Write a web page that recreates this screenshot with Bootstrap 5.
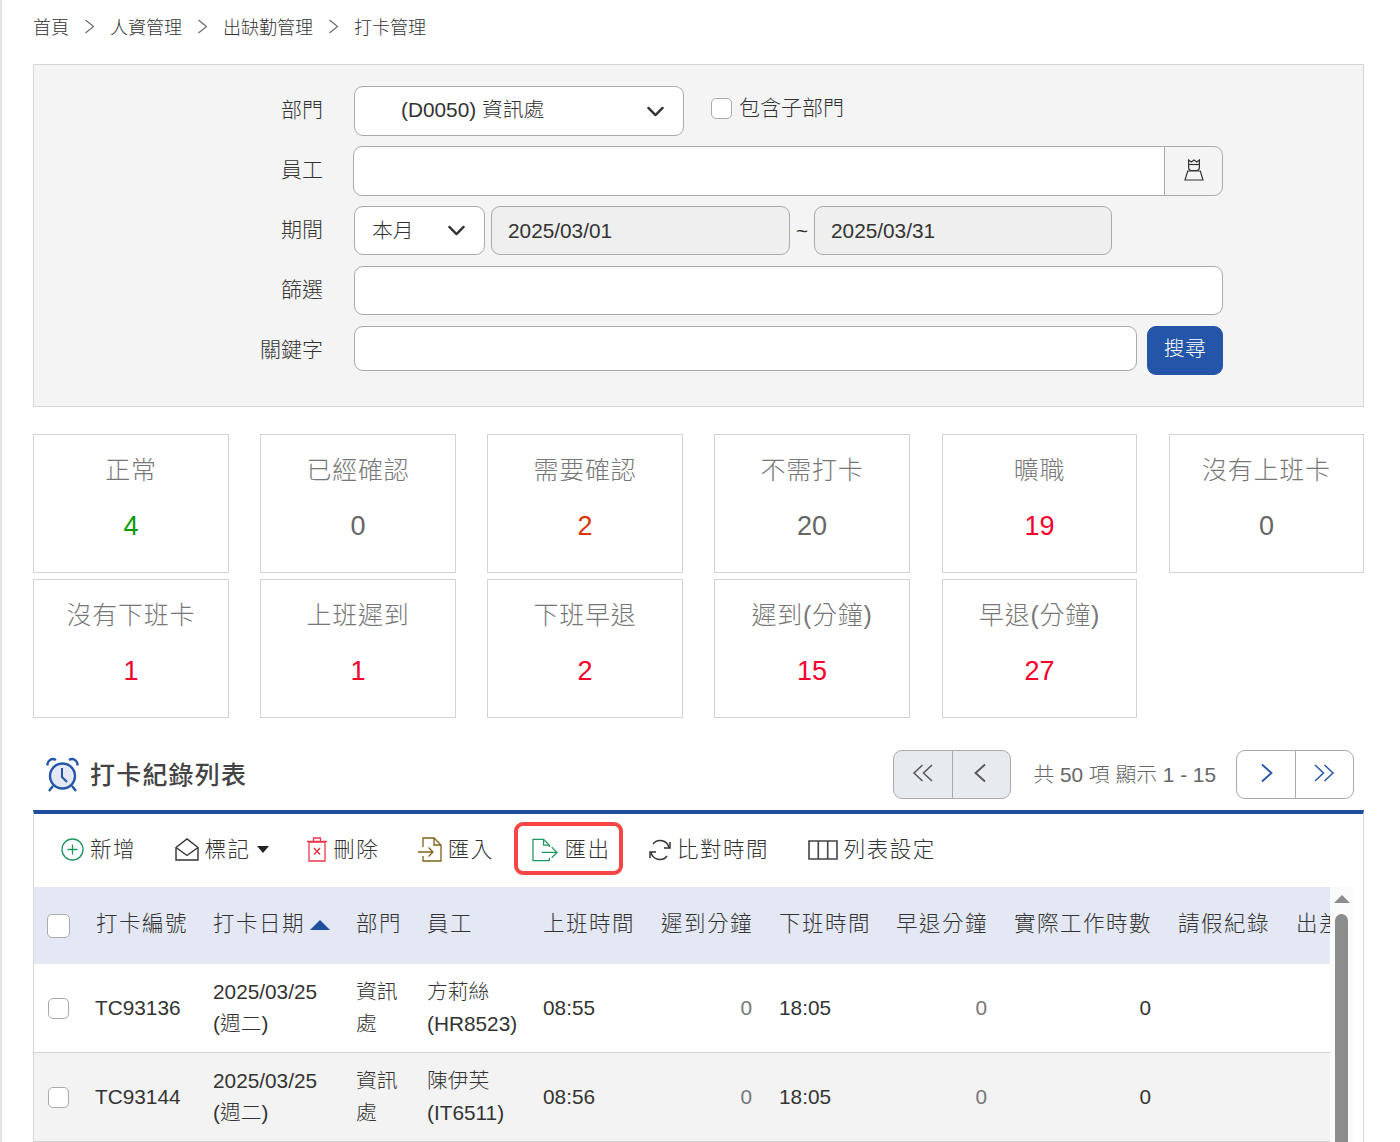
<!DOCTYPE html>
<html lang="zh-Hant">
<head>
<meta charset="utf-8">
<title>打卡管理</title>
<link href="https://cdn.jsdelivr.net/npm/bootstrap@5.3.0/dist/css/bootstrap.min.css" rel="stylesheet">
<style>
html,body{height:1142px;overflow:hidden}
body{font-family:"Liberation Sans","Noto Sans CJK TC",sans-serif;font-weight:300;font-size:20.8px;color:#333;background:#fff;border-left:2px solid #e4e4e4;padding:0 36px 0 31px}
.crumbs{height:64px;display:flex;align-items:center;padding-bottom:9px}
.crumbs .breadcrumb{--bs-breadcrumb-divider:url("data:image/svg+xml,%3Csvg xmlns='http://www.w3.org/2000/svg' width='11' height='15'%3E%3Cpath d='M1.5 1l8 6.5-8 6.5' fill='none' stroke='%23666' stroke-width='1.1'/%3E%3C/svg%3E");--bs-breadcrumb-margin-bottom:0;--bs-breadcrumb-item-padding-x:15px;font-size:18px;line-height:28px}
.crumbs .breadcrumb-item{color:#333}
.crumbs .breadcrumb-item::before{height:28px;padding-top:0;line-height:28px}
.crumbs a{color:#333;text-decoration:none}
.filter-box{background:#f4f4f4;border:1px solid #d6d6d6;height:343px;padding:21px 0 0}
.frow{display:flex;align-items:flex-start;margin-bottom:10px;height:50px}
.flabel{width:289px;flex:none;text-align:right;margin-right:31px;line-height:48px;font-size:21px;color:#333}
.frow .form-control,.frow .form-select{font-size:20.8px;font-weight:300;color:#333;border:1px solid #aaa;border-radius:9px;height:49px}
.frow .form-select{background-size:19px 19px;background-position:right 18px center;--bs-form-select-bg-img:url("data:image/svg+xml,%3csvg xmlns='http://www.w3.org/2000/svg' viewBox='0 0 16 16'%3e%3cpath fill='none' stroke='%23333' stroke-linecap='round' stroke-linejoin='round' stroke-width='2' d='m2 5 6 6 6-6'/%3e%3c/svg%3e")}
.sel-dept{width:330px;height:50px!important;padding-left:46px;padding-top:4px;padding-bottom:6px}
.sel-range{width:131px;padding-left:17px;margin-right:6px}
.date-in{width:299px;padding-left:16px}
.frow .form-control.date-in{background:#efefef}
.frow .form-control.date-end{width:298px}
.tilde{width:24px;text-align:center;line-height:49px;font-size:20.8px;font-weight:400}
.chk-sub{display:flex;align-items:center;margin:0 0 0 27px;padding:0;min-height:0;height:44px;font-size:21px}
.chk-sub .form-check-input{width:21px;height:21px;margin:0 7px 0 0;float:none;border:1px solid #aaa;border-radius:5px;flex:none}
.emp-group{width:870px;margin-left:-1px}
.emp-group .form-control{height:50px}
.emp-btn{width:59px;background:#f4f4f4;border:1px solid #aaa;border-radius:0 9px 9px 0;padding:0 0 2px;height:50px;display:flex;align-items:center;justify-content:center}
.wide-in{width:869px}
.key-in{width:783px;height:45px!important;margin-right:10px}
.search-btn{width:76px;height:49px;background:#2455a8;border:1px solid #2455a8;color:#fff;border-radius:9px;font-size:20.8px;font-weight:300;padding:0 0 3px;letter-spacing:.5px}
.search-btn:hover{background:#2455a8;color:#fff}
.stat-grid{display:grid;grid-template-columns:196px 196px 196px 197px 196px 195px;column-gap:31px;row-gap:6px;margin-top:27px}
.stat-box{height:139px;border:1px solid #d3d3d3;text-align:center;padding-top:15px;background:#fff}
.stat-box:nth-child(6n+4){width:196px}
.stat-box:nth-child(6n+5){width:195px}
.stat-name{font-size:25px;line-height:40px;letter-spacing:.75px;color:#777}
.stat-val{font-size:27px;line-height:40px;margin-top:16px;font-weight:400}
.c-green{color:#0a9a00}.c-gray{color:#666}.c-orange{color:#d8360a}.c-red{color:#f5002d}
.list-head{display:flex;align-items:center;justify-content:space-between;margin-top:32px;height:49px;padding:0 10px 0 13px}
.list-title{display:flex;align-items:center;gap:11px;font-size:25px;letter-spacing:1.2px;font-weight:500;color:#444;margin:0}
.pager{display:flex;align-items:center}
.pager-count{font-size:20.8px;color:#666;margin:0 20px 0 22px;white-space:nowrap}
.pg-group .btn{width:59.5px;height:49px;padding:0 0 3px;border:1px solid #aaa;display:flex;align-items:center;justify-content:center;background:#fff;--bs-btn-border-radius:9px}
.pg-group.off .btn{background:#e7eaee;opacity:1}
.pg-group.off .btn:last-child{padding-right:4px}
.pg-group .btn.nudge-r{padding-left:2px}
.pg-group{display:inline-flex}
.list-body{margin-top:11px;border-top:4px solid #1f4e9e;border-left:1px solid #d6d6d6;border-right:1px solid #d6d6d6;height:340px}
.toolbar{height:73px;display:flex;align-items:center;gap:38.6px;padding:0 0 2px 27px}
.tool{display:flex;align-items:center;gap:6px;background:none;border:0;padding:0;font-size:21.5px;font-weight:300;letter-spacing:1.5px;color:#333;line-height:1}
.tool span{padding-top:2px}
.caret-down{width:0;height:0;border-left:6px solid transparent;border-right:6px solid transparent;border-top:7px solid #222}
.tool.hl{position:relative}
.tool.hl::after{content:"";position:absolute;left:-18px;right:-13px;top:-16px;bottom:-13px;border:4px solid #f54545;border-radius:9px}
.table-wrap{display:flex;align-items:stretch;height:267px;padding-right:10px}
.table-clip{flex:1;overflow:hidden;min-width:0}
.punch-tbl{table-layout:fixed;width:1368px;margin:0;--bs-table-bg:transparent;--bs-table-color:#333;font-size:20.8px}
.punch-tbl>thead>tr>th{background:#e3e8f4;height:77px;font-size:21.5px;font-weight:300;letter-spacing:1.5px;white-space:nowrap;vertical-align:middle;padding:0 15px 2px 12px;border:0;overflow:hidden;color:#333}
.punch-tbl>tbody>tr>td{height:88px;padding:12px 15px 12px 12px;line-height:32px;vertical-align:middle;border-bottom:1px solid #d3d3d3;color:#333}
.punch-tbl>tbody>tr.alt>td{background:#f3f3f3}
.punch-tbl>tbody>tr>td.code-cell{padding-left:11px}
.punch-tbl .first-col{padding:0 0 0 13px!important}
.punch-tbl .form-check-input{margin:0;border:1px solid #aaa;border-radius:5px;width:21px;height:21px;display:block;float:none;margin-left:1px}
.punch-tbl thead .form-check-input{width:23px;height:24px;margin-left:0}
.num-cell{text-align:right;font-weight:400}
.muted{color:#777!important}
.sort-up{display:inline-block;width:0;height:0;border-left:10px solid transparent;border-right:10px solid transparent;border-bottom:10px solid #1f4e9e;margin-left:5px;vertical-align:1px}
.v-scroll{width:23px;background:#fafafa;flex:none;display:flex;flex-direction:column;align-items:center;padding-top:8px}
.v-up{width:0;height:0;border-left:8px solid transparent;border-right:8px solid transparent;border-bottom:8px solid #8c8c8c;margin-bottom:11px}
.v-thumb{width:13px;flex:1;background:#8c8c8c;border-radius:7px 7px 0 0}
</style>
</head>
<body>
<nav class="crumbs" aria-label="breadcrumb">
  <ol class="breadcrumb">
    <li class="breadcrumb-item"><a href="#">首頁</a></li>
    <li class="breadcrumb-item"><a href="#">人資管理</a></li>
    <li class="breadcrumb-item"><a href="#">出缺勤管理</a></li>
    <li class="breadcrumb-item active" aria-current="page">打卡管理</li>
  </ol>
</nav>

<form class="filter-box">
  <div class="frow">
    <label class="flabel">部門</label>
    <select class="form-select sel-dept"><option>(D0050) 資訊處</option></select>
    <div class="form-check chk-sub"><input class="form-check-input" type="checkbox" id="sub"><label for="sub">包含子部門</label></div>
  </div>
  <div class="frow">
    <label class="flabel">員工</label>
    <div class="input-group emp-group">
      <input class="form-control" type="text">
      <button class="btn emp-btn" type="button" aria-label="選擇員工">
        <svg width="20" height="22" viewBox="0 0 20 22" fill="none" stroke="#333" stroke-width="1.200"><path d="M4.600 1v7.500c0 1.800 1.200 3 2.900 3h5c1.700 0 2.900-1.200 2.900-3V1L12.700 3 10 1 7.300 3z"/><path d="M4.600 5.500h10.800"/><path d="M3.700 12h12.600l2.700 9H1z"/></svg>
      </button>
    </div>
  </div>
  <div class="frow">
    <label class="flabel">期間</label>
    <select class="form-select sel-range"><option>本月</option></select>
    <input class="form-control date-in" type="text" value="2025/03/01" readonly>
    <span class="tilde">~</span>
    <input class="form-control date-in date-end" type="text" value="2025/03/31" readonly>
  </div>
  <div class="frow">
    <label class="flabel">篩選</label>
    <input class="form-control wide-in" type="text">
  </div>
  <div class="frow">
    <label class="flabel">關鍵字</label>
    <input class="form-control key-in" type="text">
    <button class="btn search-btn" type="button">搜尋</button>
  </div>
</form>

<section class="stat-grid">
  <div class="stat-box"><div class="stat-name">正常</div><div class="stat-val c-green">4</div></div>
  <div class="stat-box"><div class="stat-name">已經確認</div><div class="stat-val c-gray">0</div></div>
  <div class="stat-box"><div class="stat-name">需要確認</div><div class="stat-val c-orange">2</div></div>
  <div class="stat-box"><div class="stat-name">不需打卡</div><div class="stat-val c-gray">20</div></div>
  <div class="stat-box"><div class="stat-name">曠職</div><div class="stat-val c-red">19</div></div>
  <div class="stat-box"><div class="stat-name">沒有上班卡</div><div class="stat-val c-gray">0</div></div>
  <div class="stat-box"><div class="stat-name">沒有下班卡</div><div class="stat-val c-red">1</div></div>
  <div class="stat-box"><div class="stat-name">上班遲到</div><div class="stat-val c-red">1</div></div>
  <div class="stat-box"><div class="stat-name">下班早退</div><div class="stat-val c-red">2</div></div>
  <div class="stat-box"><div class="stat-name">遲到(分鐘)</div><div class="stat-val c-red">15</div></div>
  <div class="stat-box"><div class="stat-name">早退(分鐘)</div><div class="stat-val c-red">27</div></div>
</section>

<div class="list-head">
  <h2 class="list-title">
    <svg width="33" height="36" viewBox="0 0 33 36" fill="none" stroke="#2455a8" stroke-width="2.400"><circle cx="16.500" cy="19" r="12.500" fill="#e3e8f4"/><path d="M16 11v9l5 5" stroke-width="2"/><path d="M1.500 8.500C1 3.500 6 .5 10 3"/><path d="M31.500 8.500C32 3.500 27 .5 23 3"/><path d="M7 29l-4 5M26 29l4 5"/></svg>
    <span>打卡紀錄列表</span>
  </h2>
  <div class="pager">
    <div class="btn-group pg-group off">
      <button class="btn" type="button" aria-label="第一頁"><svg width="22" height="18" viewBox="0 0 22 18" fill="none" stroke="#555" stroke-width="1.500"><path d="M10.500 1L2 9l8.500 8M20 1l-8.500 8 8.500 8"/></svg></button>
      <button class="btn" type="button" aria-label="上一頁"><svg width="14" height="20" viewBox="0 0 14 20" fill="none" stroke="#555" stroke-width="1.800"><path d="M12 1.500L2.500 10l9.500 8.500"/></svg></button>
    </div>
    <span class="pager-count">共 50 項 顯示 1 - 15</span>
    <div class="btn-group pg-group">
      <button class="btn nudge-r" type="button" aria-label="下一頁"><svg width="14" height="20" viewBox="0 0 14 20" fill="none" stroke="#2455a8" stroke-width="1.800"><path d="M2 1.500L11.500 10 2 18.500"/></svg></button>
      <button class="btn" type="button" aria-label="最後一頁"><svg width="22" height="18" viewBox="0 0 22 18" fill="none" stroke="#2455a8" stroke-width="1.500"><path d="M2 1l8.500 8L2 17M11.500 1L20 9l-8.500 8"/></svg></button>
    </div>
  </div>
</div>

<div class="list-body">
  <div class="toolbar">
    <button class="tool" type="button"><svg width="23" height="23" viewBox="0 0 23 23" fill="none" stroke="#1f9660" stroke-width="1.300"><circle cx="11.500" cy="11.500" r="10.500"/><path d="M11.500 6.500v10M6.500 11.500h10"/></svg><span>新增</span></button>
    <button class="tool" type="button"><svg width="24" height="23" viewBox="0 0 24 23" fill="none" stroke="#333" stroke-width="1.400"><path d="M1 9.500L12 1l11 8.500V22H1z"/><path d="M1 9.500l11 8 11-8"/></svg><span>標記</span><i class="caret-down"></i></button>
    <button class="tool" type="button"><svg width="20" height="25" viewBox="0 0 20 25" fill="none" stroke="#e8394f" stroke-width="1.300"><path d="M2 5h16v19H2z"/><path d="M0 4.500h20M6.500 4V1h7v3" /><path d="M7 11l6 6.500M13 11l-6 6.500" stroke-width="1.600"/></svg><span>刪除</span></button>
    <button class="tool" type="button"><svg width="24" height="25" viewBox="0 0 24 25" fill="none" stroke="#80611a" stroke-width="1.300"><path d="M5 10V1h11l7 7v16H5v-5"/><path d="M16 1v7h7"/><path d="M0 15h15M10.500 10.500L15 15l-4.500 4.500"/></svg><span>匯入</span></button>
    <button class="tool hl" type="button"><svg width="26" height="24" viewBox="0 0 27 24" fill="none" stroke="#1f9660" stroke-width="1.300"><path d="M18 9V7l-6-6H1v22h17v-3"/><path d="M12 1v6h6"/><path d="M10 14.500h16M20.500 9l5.500 5.500-5.500 5.500"/></svg><span>匯出</span></button>
    <button class="tool" type="button"><svg width="22" height="22" viewBox="0 0 22 22" fill="none" stroke="#333" stroke-width="1.500"><path d="M20 9A9 9 0 0 0 4 5"/><path d="M2 13a9 9 0 0 0 16 4"/><path d="M15 9h6V3"/><path d="M7 13H1v6"/></svg><span>比對時間</span></button>
    <button class="tool" type="button"><svg width="30" height="20" viewBox="0 0 30 20" fill="none" stroke="#444" stroke-width="1.600"><path d="M1 1h28v18H1zM10.300 1v18M19.700 1v18"/></svg><span>列表設定</span></button>
  </div>
  <div class="table-wrap">
    <div class="table-clip">
      <table class="table punch-tbl">
        <colgroup><col style="width:50px"><col style="width:117px"><col style="width:143px"><col style="width:71px"><col style="width:116px"><col style="width:118px"><col style="width:118px"><col style="width:117px"><col style="width:118px"><col style="width:164px"><col style="width:118px"><col style="width:118px"></colgroup>
        <thead>
          <tr>
            <th class="first-col"><input class="form-check-input" type="checkbox" aria-label="全選"></th>
            <th>打卡編號</th><th>打卡日期<i class="sort-up"></i></th><th>部門</th><th>員工</th><th>上班時間</th><th>遲到分鐘</th><th>下班時間</th><th>早退分鐘</th><th>實際工作時數</th><th>請假紀錄</th><th>出差紀錄</th>
          </tr>
        </thead>
        <tbody>
          <tr>
            <td class="first-col"><input class="form-check-input" type="checkbox" aria-label="選取"></td>
            <td class="code-cell">TC93136</td><td>2025/03/25<br>(週二)</td><td>資訊處</td><td>方莉絲<br>(HR8523)</td><td>08:55</td><td class="num-cell muted">0</td><td>18:05</td><td class="num-cell muted">0</td><td class="num-cell">0</td><td></td><td></td>
          </tr>
          <tr class="alt">
            <td class="first-col"><input class="form-check-input" type="checkbox" aria-label="選取"></td>
            <td class="code-cell">TC93144</td><td>2025/03/25<br>(週二)</td><td>資訊處</td><td>陳伊芙<br>(IT6511)</td><td>08:56</td><td class="num-cell muted">0</td><td>18:05</td><td class="num-cell muted">0</td><td class="num-cell">0</td><td></td><td></td>
          </tr>
        </tbody>
      </table>
    </div>
    <div class="v-scroll"><i class="v-up"></i><div class="v-thumb"></div></div>
  </div>
</div>
<script src="https://cdn.jsdelivr.net/npm/bootstrap@5.3.0/dist/js/bootstrap.bundle.min.js"></script>
</body>
</html>
